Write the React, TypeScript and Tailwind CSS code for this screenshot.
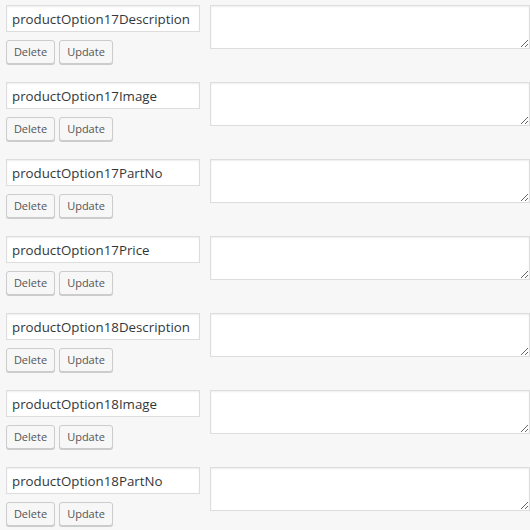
const fields = [
  "productOption17Description",
  "productOption17Image",
  "productOption17PartNo",
  "productOption17Price",
  "productOption18Description",
  "productOption18Image",
  "productOption18PartNo",
];

function FieldRow({ name }: { name: string }) {
  return (
    <div className="flex items-start h-[77px]">
      <div className="flex flex-col w-[194px] ml-[6px]">
        <input
          type="text"
          defaultValue={name}
          className="h-[27px] w-full border border-[#ddd] bg-white px-[5px] text-[13.3px] text-[#32373c] shadow-[inset_0_1px_2px_rgba(0,0,0,0.07)] outline-none"
        />
        <div className="flex gap-[4px] mt-[8px]">
          <button className="h-[24px] w-[49px] rounded-[3px] border border-[#ccc] bg-[#f7f7f7] text-[11px] text-[#555] shadow-[0_1px_0_#ccc]">
            Delete
          </button>
          <button className="h-[24px] w-[54px] rounded-[3px] border border-[#ccc] bg-[#f7f7f7] text-[11px] text-[#555] shadow-[0_1px_0_#ccc]">
            Update
          </button>
        </div>
      </div>
      <textarea className="ml-[10px] h-[44px] w-[320px] shrink-0 border border-[#ddd] bg-white shadow-[inset_0_1px_2px_rgba(0,0,0,0.07)] outline-none" />
    </div>
  );
}

export default function App() {
  return (
    <div
      className="w-[530px] h-[530px] overflow-hidden bg-[#f7f7f7] pt-[5px]"
      style={{ fontFamily: '"Open Sans", "Noto Sans", sans-serif' }}
    >
      {fields.map((f) => (
        <FieldRow key={f} name={f} />
      ))}
    </div>
  );
}
